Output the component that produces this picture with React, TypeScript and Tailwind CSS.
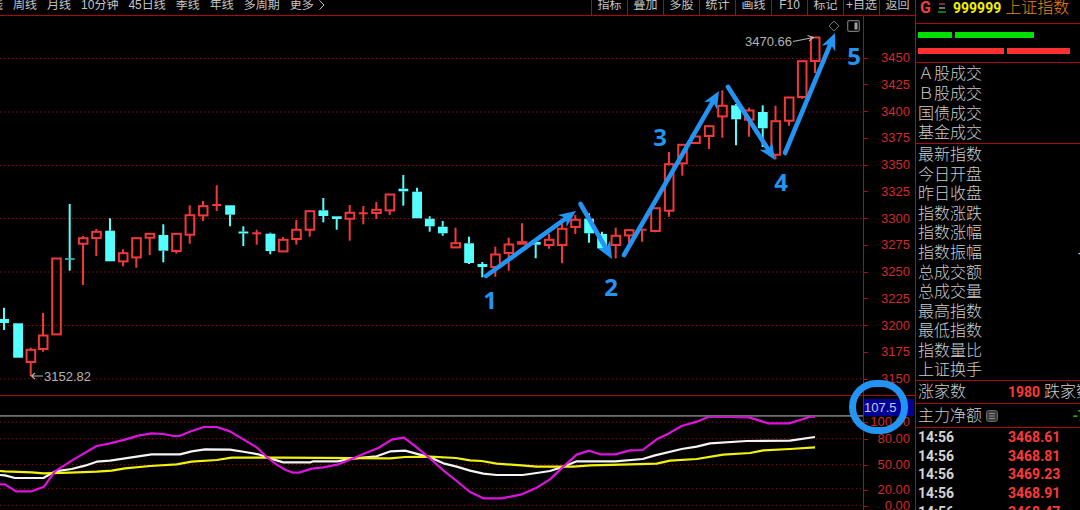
import React from "react";

type Candle = {
  x: number;
  high: number;
  top: number;
  bottom: number;
  low: number;
  up: boolean;
};

const c = (up: 0 | 1, x: number, high: number, top: number, bottom: number, low: number): Candle => ({
  x,
  high,
  top,
  bottom,
  low,
  up: up === 1,
});

const PLOT_W = 863;
const PLOT_TOP = 16;
const PLOT_H = 379;

const candles: Candle[] = [
  c(0, 4, 307.7, 319, 323, 330),
  c(0, 18, 323.3, 323.3, 357.7, 357.7),
  c(1, 30.7, 347.7, 349.3, 362.3, 376),
  c(1, 43, 313, 335, 349.3, 351.7),
  c(1, 56.3, 258, 258, 334.7, 334.7),
  c(0, 69.7, 204, 258.4, 259.6, 270.7),
  c(1, 83, 236, 237.7, 244, 285),
  c(1, 96.3, 229, 231.3, 238.3, 256),
  c(0, 110, 218.3, 230.7, 261.3, 261.3),
  c(1, 123, 249.3, 252.7, 261.7, 266.3),
  c(1, 136.3, 237.7, 237.7, 257.7, 267.7),
  c(1, 149.7, 233.3, 233.3, 238, 255),
  c(0, 163.3, 224.3, 235, 250.7, 262.3),
  c(1, 176.3, 233.3, 233.3, 251.3, 253.7),
  c(1, 189.7, 205.3, 214.7, 235, 243.7),
  c(1, 203, 201, 205.7, 215.7, 221),
  c(1, 216.7, 185.3, 205, 205, 211),
  c(0, 230, 205.3, 205.3, 214.7, 226.3),
  c(0, 243.3, 226.3, 231.5, 233.5, 246),
  c(1, 256.7, 229.7, 233.3, 233.3, 244.7),
  c(0, 270.3, 232.7, 233.7, 251, 254.3),
  c(1, 283, 237, 239.3, 251.7, 251.7),
  c(1, 296.3, 220, 229.3, 239.3, 244.7),
  c(1, 309.7, 210.7, 210.7, 230, 236.7),
  c(0, 323.3, 198, 210.3, 216, 222.3),
  c(0, 336.7, 216.3, 216.3, 219, 229.7),
  c(1, 349.7, 205, 212.3, 219, 240.7),
  c(1, 363.3, 206, 213.3, 213.3, 224.3),
  c(1, 376.3, 202, 209.3, 213.3, 219),
  c(1, 389.7, 194, 194, 210.7, 215),
  c(0, 403.3, 175, 188.7, 191.3, 205.7),
  c(0, 417, 187.7, 191.7, 218.3, 218.3),
  c(0, 429.7, 216.3, 218.7, 226.3, 231.7),
  c(0, 442.7, 221, 226.7, 233.3, 235.7),
  c(1, 455.5, 227.7, 242.7, 247.7, 247.7),
  c(0, 469, 236.7, 243.3, 263, 264),
  c(0, 482.3, 262, 264, 267, 277.3),
  c(1, 495.3, 246.7, 254, 267.3, 276.7),
  c(1, 508.7, 237.7, 244, 253.3, 270.7),
  c(1, 522, 223.3, 241.7, 244, 244),
  c(0, 535.7, 242, 242, 244.7, 258.3),
  c(1, 549, 234, 239.3, 245.3, 248.7),
  c(1, 562, 223, 228.3, 245.3, 263.3),
  c(1, 575.3, 215, 219.3, 227.3, 234),
  c(0, 589, 213.3, 218.7, 233.3, 242.7),
  c(0, 602, 231.7, 234, 248.3, 249.3),
  c(1, 615.7, 227.7, 235.3, 245.3, 258.3),
  c(1, 629, 229.7, 229.7, 235.7, 243.3),
  c(1, 642, 229.7, 229.7, 229.7, 241.7),
  c(1, 655.3, 207.7, 207.7, 231.3, 232.3),
  c(1, 669, 152, 163.7, 211, 216.7),
  c(1, 682.3, 144.3, 144.3, 163.7, 175.7),
  c(1, 695.3, 136, 136, 143.3, 143.3),
  c(1, 709, 125.7, 125.7, 136.3, 149),
  c(1, 722.3, 90.3, 105.3, 116.7, 137.7),
  c(0, 736, 104, 105.3, 119.3, 145.3),
  c(1, 749, 107.7, 110, 120, 136.7),
  c(0, 762.7, 105.3, 112, 128.3, 147),
  c(1, 775.5, 105.7, 120.7, 155, 159.3),
  c(1, 789, 97, 97, 121, 125.7),
  c(1, 802, 60.7, 60.7, 97.3, 98.7),
  c(1, 815, 37, 37, 61.3, 73),
];

const priceGrid = [58.5, 112, 165.5, 218.5, 272, 325.5, 379];

const waves = [
  { n: "1", x: 490, y: 300, from: [486, 276], to: [576, 211] },
  { n: "2", x: 611, y: 287, from: [580.5, 204], to: [612, 259] },
  { n: "3", x: 660, y: 137, from: [624, 255], to: [719, 91] },
  { n: "4", x: 781, y: 182, from: [728, 87], to: [775, 160] },
  { n: "5", x: 854, y: 56, from: [785, 153], to: [835, 33] },
];

const prices = ["3450", "3425", "3400", "3375", "3350", "3325", "3300", "3275", "3250", "3225", "3200", "3175", "3150"];

const place = (x: number, y: number) => ({
  left: `${(x / PLOT_W) * 100}%`,
  top: `${((y - PLOT_TOP) / PLOT_H) * 100}%`,
});

function WaveArrow({ from, to }: { from: number[]; to: number[] }) {
  const dx = to[0] - from[0];
  const dy = to[1] - from[1];
  const angle = (Math.atan2(dy, dx) * 180) / Math.PI;
  const len = Math.hypot(dx, dy);
  return (
    <g transform={`translate(${from[0]} ${from[1]}) rotate(${angle})`} fill="#2494f2">
      <path d={`M0 0H${len - 9}`} stroke="#2494f2" strokeWidth="4.6" strokeLinecap="round" />
      <path d={`M${len} 0L${len - 17} -7.4L${len - 12} 0L${len - 17} 7.4Z`} />
    </g>
  );
}

function Toolbar() {
  const periods = ["线", "周线", "月线", "10分钟", "45日线", "季线", "年线", "多周期"];
  const tools = ["指标", "叠加", "多股", "统计", "画线", "F10", "标记", "+自选", "返回"];
  return (
    <header className="flex h-4 shrink-0 items-end justify-between overflow-hidden border-b border-[#a80c0c] text-xs leading-5 text-[#c4c4c4]">
      <nav className="-ml-[9px] flex gap-[10px] whitespace-nowrap">
        {periods.map((p) => (
          <button key={p} type="button">
            {p}
          </button>
        ))}
        <button type="button" className="flex items-center gap-1">
          更多
          <svg viewBox="0 0 8 10" className="h-[10px] w-2" fill="none" stroke="currentColor">
            <path d="M1.5 0.5L6 5L1.5 9.5" />
          </svg>
        </button>
      </nav>
      <div className="flex shrink-0">
        {tools.map((t) => (
          <button key={t} type="button" className="w-9 border-l border-[#a80c0c] text-center whitespace-nowrap">
            {t}
          </button>
        ))}
      </div>
    </header>
  );
}

function PricePanel() {
  return (
    <section className="flex min-h-0">
      <div className="relative min-w-0 flex-1">
        <svg viewBox="0 16 863 379" preserveAspectRatio="none" className="block h-full w-full">
          {priceGrid.map((y) => (
            <path key={y} d={`M0 ${y}H863`} stroke="#7c1418" strokeWidth="1" strokeDasharray="1.4 2.6" />
          ))}
          {candles.map((k) => {
            const color = k.up ? "#f2393a" : "#54ffff";
            const flat = k.bottom - k.top < 0.1;
            return (
              <g key={k.x} stroke={color} strokeWidth="2" fill="none">
                {k.high < k.top && <path d={`M${k.x} ${k.high}V${k.top}`} />}
                {k.low > k.bottom && <path d={`M${k.x} ${k.bottom}V${k.low}`} />}
                {flat && <path d={`M${k.x - 4.5} ${k.top}h9`} />}
                {!flat && k.up && (
                  <rect x={k.x - 4.1} y={k.top + 0.5} width="8.6" height={Math.max(k.bottom - k.top - 0.8, 1)} />
                )}
                {!flat && !k.up && (
                  <rect x={k.x - 4.8} y={k.top} width="9.8" height={k.bottom - k.top} fill={color} stroke="none" />
                )}
              </g>
            );
          })}
          <g fill="none" stroke="#b4b4b4" strokeWidth="1.1">
            <path d="M43 376H31.5M35 373L31.5 376L35 379" />
            <path d="M793 41.5L813.5 37.5M807.5 35.5L813.5 37.5L809 41" />
          </g>
          {waves.map((w) => (
            <WaveArrow key={w.n} from={w.from} to={w.to} />
          ))}
        </svg>
        {waves.map((w) => (
          <span
            key={w.n}
            style={place(w.x, w.y)}
            className="absolute -translate-x-1/2 -translate-y-1/2 font-['Noto_Sans'] text-2xl leading-6 font-bold text-[#2494f2]"
          >
            {w.n}
          </span>
        ))}
        <span style={place(44, 377)} className="absolute -translate-y-1/2 text-[13px] leading-4 text-[#b4b4b4]">
          3152.82
        </span>
        <span style={place(745, 42)} className="absolute -translate-y-1/2 text-[13px] leading-4 text-[#b4b4b4]">
          3470.66
        </span>
        <div className="absolute top-1 right-[3px] flex items-center gap-[7px] text-[#777777]">
          <button type="button" aria-label="Marker">
            <svg viewBox="0 0 12 12" className="size-3" fill="none" stroke="currentColor">
              <path d="M6 1L11 6L6 11L1 6Z" />
            </svg>
          </button>
          <button type="button" aria-label="Side panel">
            <svg viewBox="0 0 13 12" className="h-3 w-[13px]" fill="none" stroke="currentColor">
              <rect x="0.7" y="0.7" width="11.6" height="10.6" rx="1.5" strokeWidth="1.2" />
              <rect x="7.5" y="2.5" width="3" height="7" fill="#a0a0a0" stroke="none" />
            </svg>
          </button>
        </div>
      </div>
      <div className="flex w-[52px] shrink-0 flex-col justify-between border-l border-[#b00c0c] pt-[34px] pr-[5px] pb-2">
        {prices.map((p) => (
          <AxisLabel key={p} text={p} />
        ))}
      </div>
    </section>
  );
}

function AxisLabel({ text }: { text: string }) {
  return (
    <div className="flex items-center justify-between text-[13px] leading-4 text-[#d02a2a]">
      <span className="h-px w-1 bg-[#b00c0c]" />
      {text}
    </div>
  );
}

const magenta =
  "0,343 15,343 48,364 95,364 132,350 165,304 215,272 290,228 330,220 375,209 415,197 455,190 490,192 520,198 538,198 575,183 612,171 650,171 690,184 730,208 770,232 800,261 830,284 855,299 880,308 898,308 935,296 970,292 1015,283 1055,267 1095,250 1135,234 1175,209 1212,203 1250,232 1290,265 1330,301 1370,333 1410,366 1450,385 1505,385 1565,373 1610,353 1650,328 1690,290 1730,254 1768,242 1800,253 1845,253 1890,241 1928,240 1970,208 2005,191 2045,168 2090,155 2125,141 2190,141 2247,142 2305,160 2367,160 2410,147 2430,140 2445,140";
const white =
  "0,315 15,316 45,324 130,324 165,304 215,297 255,287 290,275 330,272 455,253 540,253 575,244 615,238 690,239 735,246 775,253 800,262 850,277 932,277 940,274 1012,274 1055,266 1130,259 1172,244 1215,242 1290,262 1330,280 1370,290 1410,302 1450,311 1490,315 1568,315 1610,309 1650,303 1690,290 1730,274 1846,274 1928,267 1965,256 2045,237 2090,230 2130,220 2240,213 2370,212 2445,201";
const yellow =
  "0,303 15,304 95,307 130,310 210,308 290,305 335,302 375,295 450,288 530,283 575,275 650,270 695,263 850,263 1170,265 1215,261 1290,260 1368,264 1410,271 1445,273 1490,281 1565,286 1610,290 1720,290 1770,286 1890,283 1970,281 2010,272 2090,267 2170,254 2250,249 2290,241 2370,237 2445,232";

function IndicatorPanel() {
  return (
    <section className="relative flex min-h-0 border-t border-[#a80c0c]">
      <svg viewBox="0 78 2589 342" preserveAspectRatio="none" className="block h-full min-w-0 flex-1">
        {[156, 206, 284, 356, 406].map((y) => (
          <path key={y} d={`M0 ${y}H2589`} stroke="#7c1418" strokeWidth="3" strokeDasharray="4 8" />
        ))}
        <g fill="none" strokeWidth="6.6" strokeLinejoin="round">
          <polyline points={white} stroke="#f4f4f4" />
          <polyline points={yellow} stroke="#f2f20c" />
          <polyline points={magenta} stroke="#e012e0" />
        </g>
        <path d="M0 137.5H2589" stroke="#707070" strokeWidth="5" />
        <path d="M2125 141H2247M2430 141H2445" stroke="#c012c0" strokeWidth="4" />
      </svg>
      <div className="relative w-[52px] shrink-0 border-l border-[#b00c0c] pt-[18px] pr-[5px]">
        <AxisLabel text="100.00" />
        <div className="mt-px">
          <AxisLabel text="80.00" />
        </div>
        <div className="mt-[10px]">
          <AxisLabel text="50.00" />
        </div>
        <div className="mt-[9px]">
          <AxisLabel text="20.00" />
        </div>
        <AxisLabel text="0.00" />
        <output className="absolute top-[3px] right-px left-0 h-[17px] bg-[#000096] text-[13px] leading-[17px] text-[#c8c8e8]">
          107.5
        </output>
      </div>
      <div className="pointer-events-none absolute -top-4 right-[7px] h-[54px] w-[59px] rounded-full border-[7px] border-[#2494f2]" />
    </section>
  );
}

const turnover = ["Ａ股成交", "Ｂ股成交", "国债成交", "基金成交"];
const quotes = [
  "最新指数",
  "今日开盘",
  "昨日收盘",
  "指数涨跌",
  "指数涨幅",
  "指数振幅",
  "总成交额",
  "总成交量",
  "最高指数",
  "最低指数",
  "指数量比",
  "上证换手",
];
const trades = ["3468.61", "3468.81", "3469.23", "3468.91", "3468.47"];

function Sidebar() {
  return (
    <aside className="flex h-full w-[165px] shrink-0 flex-col overflow-hidden border-l border-[#b00c0c] text-base whitespace-nowrap text-[#cccccc]">
      <h1 className="flex h-6 shrink-0 items-center border-b border-[#a80c0c] pb-2 pl-1 leading-4 font-light">
        <span className="w-[18px] font-['Roboto'] text-base font-bold text-[#f04040]">G</span>
        <svg viewBox="0 0 8 10" className="mr-[7px] h-[10px] w-2" strokeWidth="1.3">
          <path d="M1 1H7" stroke="#b05050" />
          <path d="M1 5H7" stroke="#b0b0b0" />
          <path d="M0 9H8" stroke="#20b020" />
        </svg>
        <span className="mr-1 font-['Roboto'] text-sm font-bold text-[#f4f400]">999999</span>
        <span className="text-[#e88814]">上证指数</span>
      </h1>
      <div className="flex h-[39px] shrink-0 flex-col gap-[10px] border-b border-[#a80c0c] pt-2 pr-[10px] pl-[2px]">
        <div className="flex gap-[3px]">
          <span className="h-[6px] w-[34px] bg-[#00e000]" />
          <span className="h-[6px] w-[79px] bg-[#00e000]" />
        </div>
        <div className="flex gap-[3px]">
          <span className="h-[6px] w-[86px] bg-[#ff3030]" />
          <span className="h-[6px] flex-1 bg-[#ff3030]" />
        </div>
      </div>
      <ul className="grid h-[81px] shrink-0 grid-rows-4 border-b border-[#a80c0c] pt-px pl-[2px] leading-5 font-light">
        {turnover.map((t) => (
          <li key={t}>{t}</li>
        ))}
      </ul>
      <ul className="grid h-[237px] shrink-0 grid-rows-12 border-b border-[#a80c0c] pt-px pl-[2px] leading-5 font-light">
        {quotes.map((q) => (
          <li key={q} className="flex justify-between">
            {q}
            {q === "指数振幅" && <span className="-mr-[3px]">-</span>}
          </li>
        ))}
      </ul>
      <div className="flex h-[23px] shrink-0 items-center border-b border-[#a80c0c] pl-[2px] font-light">
        <span className="w-[90px] shrink-0">涨家数</span>
        <span className="w-9 shrink-0 font-['Roboto'] text-sm font-bold text-[#ff3838]">1980</span>
        <span>跌家数</span>
      </div>
      <div className="flex h-6 shrink-0 items-center border-b border-[#a80c0c] pl-[2px] font-light">
        主力净额
        <svg viewBox="0 0 12 12" className="ml-1 size-3" fill="none">
          <rect x="0.6" y="0.6" width="10.8" height="10.8" rx="2" fill="#3a3a3a" stroke="#6a6a6a" />
          <path d="M3 3.5H9M3 6H9M3 8.5H9" stroke="#8a8a8a" />
        </svg>
        <span className="-mr-[6px] ml-auto font-['Roboto'] text-sm font-bold text-[#10b010]">-7</span>
      </div>
      <table className="ml-[2px] h-[93px] shrink-0 border-collapse font-['Roboto'] text-sm leading-[18px] font-bold">
        <tbody>
          {trades.map((t) => (
            <tr key={t}>
              <td className="w-[90px] p-0 text-[#d4d4d4]">14:56</td>
              <td className="p-0 text-[#ff3838]">{t}</td>
            </tr>
          ))}
        </tbody>
      </table>
    </aside>
  );
}

export default function App() {
  return (
    <div className="flex h-screen w-full overflow-hidden bg-black font-['Liberation_Sans','Noto_Sans_CJK_SC',sans-serif]">
      <main className="flex min-w-0 flex-1 flex-col">
        <Toolbar />
        <div className="grid min-h-0 flex-1 grid-rows-[379fr_115fr]">
          <PricePanel />
          <IndicatorPanel />
        </div>
      </main>
      <Sidebar />
    </div>
  );
}
